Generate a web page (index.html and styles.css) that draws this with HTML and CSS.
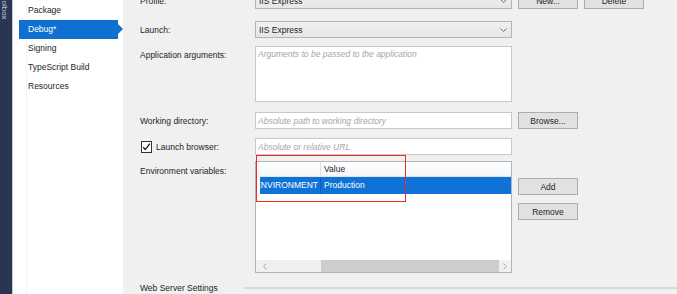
FILE: index.html
```html
<!DOCTYPE html>
<html>
<head>
<meta charset="utf-8">
<link rel="stylesheet" href="styles.css">
</head>
<body>
<div class="toolbox"><span class="toolbox-text">Toolbox</span></div>
<nav class="sidebar">
  <div class="nav-item">Package</div>
  <div class="nav-item active">Debug*</div>
  <div class="nav-item">Signing</div>
  <div class="nav-item">TypeScript Build</div>
  <div class="nav-item">Resources</div>
</nav>
<main class="main">
  <div class="row r-profile">
    <div class="label">Profile:</div>
    <div class="select"><span>IIS Express</span><svg class="chev" width="7" height="4" viewBox="0 0 7 4"><path d="M0.5 0.5 L3.5 3.5 L6.5 0.5" fill="none" stroke="#707070" stroke-width="1"/></svg></div>
    <div class="btn first">New...</div>
    <div class="btn">Delete</div>
  </div>
  <div class="row r-launch">
    <div class="label">Launch:</div>
    <div class="select"><span>IIS Express</span><svg class="chev" width="7" height="4" viewBox="0 0 7 4"><path d="M0.5 0.5 L3.5 3.5 L6.5 0.5" fill="none" stroke="#707070" stroke-width="1"/></svg></div>
  </div>
  <div class="row r-args top">
    <div class="label pad-top">Application arguments:</div>
    <div class="input textarea"><span class="ph">Arguments to be passed to the application</span></div>
  </div>
  <div class="row r-dir">
    <div class="label">Working directory:</div>
    <div class="input"><span class="ph">Absolute path to working directory</span></div>
    <div class="btn first">Browse...</div>
  </div>
  <div class="row r-browser">
    <div class="label check-label">
      <svg class="checkbox" width="11" height="12" viewBox="0 0 11 12"><rect x="0.5" y="0.5" width="10" height="11" fill="#fff" stroke="#333"/><path d="M2.2 6.2 L4.4 8.6 L8.8 2.6" fill="none" stroke="#111" stroke-width="1.3"/></svg>
      <span>Launch browser:</span>
    </div>
    <div class="input"><span class="ph">Absolute or relative URL</span></div>
  </div>
  <div class="row r-env top">
    <div class="label pad-top-env">Environment variables:</div>
    <div class="grid-wrap">
      <div class="grid">
        <div class="ghead"><div class="gh1"></div><div class="gh2">Value</div></div>
        <div class="grow">
          <div class="gc1"><span>ASPNETCORE_ENVIRONMENT</span></div>
          <div class="gc2">Production</div>
        </div>
        <div class="gspace"></div>
        <div class="hscroll">
          <div class="sarrow"><svg width="4" height="7" viewBox="0 0 4 7"><path d="M3.5 0.5 L0.5 3.5 L3.5 6.5" fill="none" stroke="#a6a6a6"/></svg></div>
          <div class="strack"></div>
          <div class="sthumb"></div>
          <div class="sarrow right"><svg width="4" height="7" viewBox="0 0 4 7"><path d="M0.5 0.5 L3.5 3.5 L0.5 6.5" fill="none" stroke="#a6a6a6"/></svg></div>
        </div>
      </div>
      <div class="highlight"></div>
    </div>
    <div class="btn-col">
      <div class="btn">Add</div>
      <div class="btn">Remove</div>
    </div>
  </div>
  <div class="row r-web">
    <div class="section-label">Web Server Settings</div>
    <div class="section-line"></div>
  </div>
</main>
</body>
</html>
```
FILE: styles.css
```css
html, body {
  margin: 0;
  height: 100%;
}
body {
  display: flex;
  height: 294px;
  overflow: hidden;
  font-family: "Liberation Sans", Arial, sans-serif;
  font-size: 8.5px;
  color: #1e1e1e;
  background: #f0f0f0;
}
.toolbox {
  width: 12px;
  flex: none;
  background: #2a3553;
  border-right: 1px solid #c9ccd3;
  overflow: hidden;
}
.toolbox-text {
  display: block;
  writing-mode: vertical-rl;
  color: #c3c8d6;
  font-size: 8px;
  margin-top: -8px;
  margin-left: 0px;
  line-height: 8px;
}
.sidebar {
  width: 110px;
  flex: none;
  background: linear-gradient(to right, #fff 13px, #f4f4f4 13px, #f4f4f4 14px, #fff 14px);
  padding-top: 0.5px;
  box-sizing: border-box;
}
.nav-item {
  height: 19px;
  line-height: 19px;
  margin-left: 6px;
  margin-right: 5px;
  padding-left: 9px;
  position: relative;
  white-space: nowrap;
}
.nav-item.active {
  background: #0e70d0;
  color: #fff;
}
.nav-item.active::after {
  content: "";
  position: absolute;
  right: -5px;
  top: 4.5px;
  border-top: 5px solid transparent;
  border-bottom: 5px solid transparent;
  border-left: 5px solid #0e70d0;
}
.main {
  flex: 1;
  display: flex;
  flex-direction: column;
  padding-left: 17px;
  background: #f0f0f0;
}
.row {
  display: flex;
  align-items: center;
  flex: none;
}
.row.top {
  align-items: flex-start;
}
.label {
  width: 115px;
  flex: none;
  white-space: nowrap;
}
.pad-top { padding-top: 4px; }
.pad-top-env { padding-top: 5px; }
.r-profile { margin-top: -8px; height: 17px; }
.r-launch { margin-top: 12px; height: 17px; }
.r-args { margin-top: 8px; height: 56px; }
.r-dir { margin-top: 10px; height: 17px; }
.r-browser { margin-top: 9px; height: 17px; }
.r-env { margin-top: 6px; height: 112px; }
.r-web { margin-top: 10px; height: 10px; }
.select {
  width: 257px;
  height: 17px;
  box-sizing: border-box;
  border: 1px solid #b4b4b4;
  background: linear-gradient(#f0f0f0, #e6e6e6);
  display: flex;
  align-items: center;
  justify-content: space-between;
  padding-left: 3px;
  padding-right: 4px;
}
.chev { display: block; }
.input {
  width: 257px;
  height: 17px;
  box-sizing: border-box;
  border: 1px solid #c8c8c8;
  background: #fff;
  display: flex;
  align-items: center;
  padding-left: 2px;
}
.input.textarea {
  height: 56px;
  align-items: flex-start;
  padding-top: 2px;
}
.ph {
  color: #a6a6a6;
  font-style: italic;
  white-space: nowrap;
}
.btn {
  width: 60px;
  height: 17px;
  box-sizing: border-box;
  border: 1px solid #adadad;
  background: #e1e1e1;
  display: flex;
  align-items: center;
  justify-content: center;
  margin-left: 6px;
  flex: none;
}
.check-label {
  display: flex;
  align-items: center;
}
.checkbox {
  display: block;
  margin-left: 1px;
  margin-right: 4px;
}
.grid-wrap {
  position: relative;
  width: 257px;
  height: 112px;
  flex: none;
}
.grid {
  width: 257px;
  height: 112px;
  box-sizing: border-box;
  border: 1px solid #a9b6c6;
  background: #fff;
  display: flex;
  flex-direction: column;
}
.ghead {
  height: 15px;
  flex: none;
  display: flex;
  box-sizing: border-box;
  background: linear-gradient(#ffffff, #f5f6f8);
  border-bottom: 1px solid #e3e5e8;
}
.gh1 {
  width: 64px;
  flex: none;
  border-right: 1px solid #e0e0e0;
}
.gh2 {
  padding-left: 3px;
  line-height: 14px;
}
.grow {
  height: 17px;
  flex: none;
  display: flex;
  margin-left: 4px;
  background: #0e72d6;
  color: #fff;
  line-height: 17px;
}
.gc1 {
  width: 60px;
  flex: none;
  overflow: hidden;
  display: flex;
  justify-content: flex-end;
  white-space: nowrap;
  padding-right: 2px;
  box-sizing: border-box;
}
.gc2 {
  flex: 1;
  padding-left: 3px;
  border-left: 1px solid rgba(0, 40, 100, 0.25);
}
.gspace { flex: 1; }
.hscroll {
  height: 12px;
  flex: none;
  display: flex;
  background: #f0f0f0;
}
.sarrow {
  width: 17px;
  flex: none;
  display: flex;
  align-items: center;
  justify-content: center;
}
.sarrow.right { width: 12px; }
.strack { width: 48px; flex: none; }
.sthumb {
  flex: 1;
  background: #cdcdcd;
}
.highlight {
  position: absolute;
  left: 1px;
  top: -6px;
  width: 150px;
  height: 47px;
  box-sizing: border-box;
  border: 1px solid #ec2b2b;
  pointer-events: none;
}
.btn-col {
  display: flex;
  flex-direction: column;
  gap: 8px;
  padding-top: 17px;
}
.section-label {
  width: 104px;
  flex: none;
  white-space: nowrap;
}
.section-line {
  flex: 1;
  height: 2px;
  background: #dadada;
}
```
